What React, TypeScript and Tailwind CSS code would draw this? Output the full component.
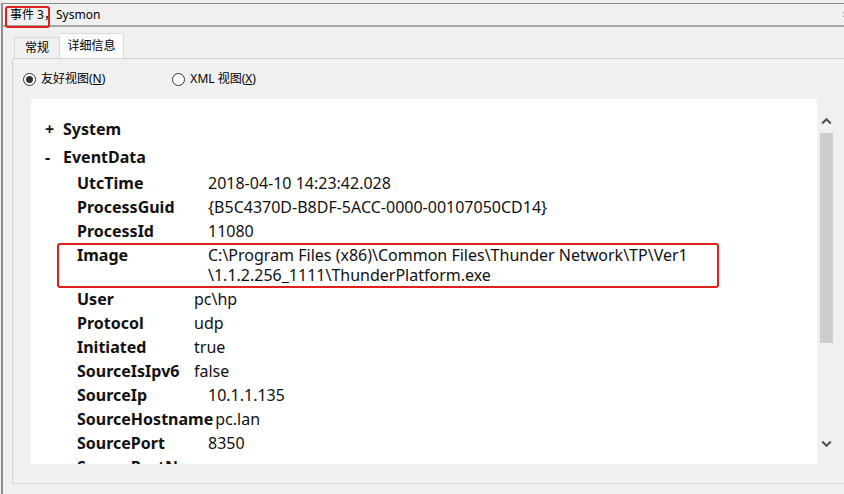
import React from "react";

const ui = { fontFamily: '"Noto Sans", "Noto Sans CJK SC", sans-serif' };

const rows: { key: string; value: React.ReactNode; w?: string; mark?: boolean }[] = [
  { key: "UtcTime", value: "2018-04-10 14:23:42.028" },
  { key: "ProcessGuid", value: "{B5C4370D-B8DF-5ACC-0000-00107050CD14}" },
  { key: "ProcessId", value: "11080" },
  {
    key: "Image",
    value: (
      <>
        C:\Program Files (x86)\Common Files\Thunder Network\TP\Ver1
        <br />
        \1.1.2.256_1111\ThunderPlatform.exe
      </>
    ),
    mark: true,
  },
  { key: "User", value: "pc\\hp", w: "w-[117px]" },
  { key: "Protocol", value: "udp", w: "w-[117px]" },
  { key: "Initiated", value: "true", w: "w-[117px]" },
  { key: "SourceIsIpv6", value: "false", w: "w-[117px]" },
  { key: "SourceIp", value: "10.1.1.135" },
  { key: "SourceHostname", value: "pc.lan", w: "pr-[2px]" },
  { key: "SourcePort", value: "8350" },
  { key: "SourcePortName", value: "" },
];

function Radio({ checked }: { checked?: boolean }) {
  return (
    <span className="grid h-[13px] w-[13px] shrink-0 place-items-center rounded-full border border-[#333] bg-white">
      {checked ? <span className="h-[7px] w-[7px] rounded-full bg-[#333]" /> : null}
    </span>
  );
}

function Chevron({ up }: { up?: boolean }) {
  return (
    <svg width="11" height="8" viewBox="0 0 11 8" className={up ? "" : "rotate-180"}>
      <path d="M1.2 6.5 L5.5 2.2 L9.8 6.5" fill="none" stroke="#505050" strokeWidth="2" />
    </svg>
  );
}

export default function App() {
  return (
    <div className="h-[494px] w-[844px] overflow-hidden bg-[#f0f0f0] pl-[1px] pt-[3px] text-[#000]" style={ui}>
      <div className="flex h-full flex-col border-l-2 border-t border-[#8c8c8c]">
        {/* Title */}
        <div className="relative flex h-[23px] shrink-0 items-center border-b-2 border-[#a6a6a6] pl-[7px] text-[12px]">
          <span>事件 3，Sysmon</span>
          <span className="ml-auto mr-[-6px] text-[13px] font-bold">×</span>
          <span className="absolute left-[2px] top-[2px] h-[22px] w-[45px] rounded-[3px] border-2 border-[#e0201c]" />
        </div>

        {/* Tabs */}
        <div className="ml-[11px] flex h-[31px] shrink-0 items-end text-[12px]">
          <div className="flex h-[21px] w-[46px] items-center justify-center border border-b-0 border-[#d9d9d9] bg-[#f0f0f0]">
            常规
          </div>
          <div className="flex h-[25px] w-[64px] items-center justify-center border border-b-0 border-l-0 border-[#d9d9d9] bg-[#fcfcfc]">
            详细信息
          </div>
        </div>

        {/* Panel */}
        <div className="mb-[10px] ml-[9px] flex flex-1 flex-col border-b border-l border-t border-[#d4d4d4]">
          <div className="flex h-[40px] shrink-0 items-center text-[12px]">
            <div className="ml-[10px] flex items-center gap-[5px]">
              <Radio checked />
              <span>
                友好视图(<span className="underline">N</span>)
              </span>
            </div>
            <div className="ml-[67px] flex items-center gap-[5px]">
              <Radio />
              <span>
                XML 视图(<span className="underline">X</span>)
              </span>
            </div>
          </div>

          <div className="ml-[18px] flex h-[365px] shrink-0">
            <div className="w-[786px] overflow-hidden bg-white pt-[16px] text-[16px] text-[#111]">
              <div className="flex h-[28px] items-center font-bold">
                <span className="ml-[14px] w-[18px]">+</span>
                <span>System</span>
              </div>
              <div className="flex h-[28px] items-center font-bold">
                <span className="ml-[14px] w-[18px]">-</span>
                <span>EventData</span>
              </div>
              {rows.map((r) => (
                <div key={r.key} className="relative ml-[46px] flex py-[2px] leading-[20px]">
                  <span className={`${r.w ?? "w-[131px]"} shrink-0 whitespace-nowrap font-bold`}>{r.key}</span>
                  <span className="whitespace-nowrap">{r.value}</span>
                  {r.mark ? (
                    <span className="absolute left-[-20px] top-0 h-[45px] w-[662px] rounded-[3px] border-2 border-[#e0201c]" />
                  ) : null}
                </div>
              ))}
            </div>

            {/* Scrollbar */}
            <div className="flex w-[19px] flex-col items-center">
              <div className="flex h-[34px] w-full items-start justify-center pt-[18px]">
                <Chevron up />
              </div>
              <div className="h-[210px] w-[13px] bg-[#cdcdcd]" />
              <div className="flex-1" />
              <div className="flex h-[30px] w-full items-start justify-center pt-[6px]">
                <Chevron />
              </div>
            </div>
          </div>
        </div>
      </div>
    </div>
  );
}
